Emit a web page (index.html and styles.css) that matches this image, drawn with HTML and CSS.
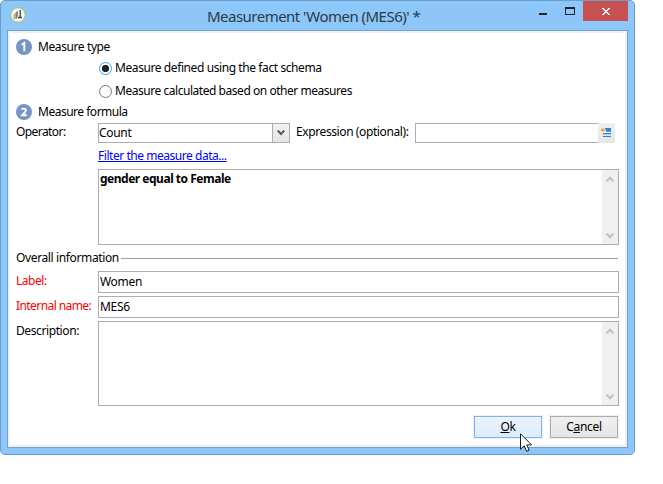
FILE: index.html
```html
<!DOCTYPE html>
<html lang="en">
<head>
<meta charset="utf-8">
<title>Measurement</title>
<link rel="stylesheet" href="styles.css">
</head>
<body>
<div class="window">
  <header class="titlebar">
    <svg class="app-icon" width="16" height="16" viewBox="0 0 16 16"><circle cx="8" cy="8" r="7.3" fill="#f4f5ee" stroke="#9bc464"/><path d="M3.5 7.5L7 4.5V12H3.5z" fill="#aeb0a9"/><path d="M6 4.5h2V9l-2 3z" fill="#858781"/><path d="M10.2 3v7M7.8 10.5h4" stroke="#3d403c" stroke-width="1.3"/></svg>
    <h1 class="title">Measurement 'Women (MES6)' *</h1>
    <div class="controls">
      <span class="minimize"></span>
      <span class="maximize"></span>
      <span class="close"><svg width="8" height="7" viewBox="0 0 8 7" shape-rendering="crispEdges"><path d="M0 0h2v1h1v1h2V1h1V0h2v1H7v1H6v1H5v1h1v1h1v1h1v1H6V6H5V5H3v1H2v1H0V6h1V5h1V4h1V3H2V2H1V1H0z" fill="#fff"/></svg></span>
    </div>
  </header>
  <main class="client">
    <div class="step"><span class="badge"><svg width="16" height="16" viewBox="0 0 16 16"><path d="M5.7 5.7L8.3 4v8.3" fill="none" stroke="#fff" stroke-width="1.9"/></svg></span><span class="t w-type">Measure type</span></div>
    <div class="radio first"><span class="dot on"></span><span class="t w-fact">Measure defined using the fact schema</span></div>
    <div class="radio"><span class="dot"></span><span class="t w-calc">Measure calculated based on other measures</span></div>
    <div class="step second"><span class="badge"><svg width="16" height="16" viewBox="0 0 16 16"><path d="M5.4 5.4C6.5 4.4 9.9 4 9.8 6.4C9.8 8 7.5 9.5 6.2 11.3H10.8" fill="none" stroke="#fff" stroke-width="1.9"/></svg></span><span class="t w-formula">Measure formula</span></div>
    <div class="row operator">
      <span class="label t w-op">Operator:</span>
      <div class="select"><span class="t w-count">Count</span><span class="drop"><svg width="8" height="6" viewBox="0 0 8 6"><path d="M.7 .5L4 4L7.3 .5" fill="none" stroke="#5a5a5a" stroke-width="2"/></svg></span></div>
      <span class="expr t w-expr">Expression (optional):</span>
      <div class="expr-box"></div>
      <span class="pick"><svg width="11" height="10" viewBox="0 0 11 10" shape-rendering="crispEdges"><path d="M4 0h6v3H4z" fill="#2d84d5"/><path d="M5 3h5v1H5z" fill="#659dde"/><path d="M2 5h8v1H2z" fill="#3b88d3"/><path d="M2 6h8v1H2z" fill="#a6c9eb"/><path d="M2 8h8v1H2z" fill="#2d84d5"/><path d="M1 0h2v1H1zM1 3h2v1H1z" fill="#f5cf88"/><path d="M0 1h3v2H0z" fill="#eea52b"/><path d="M3 1h2v2H3z" fill="#b8cbd6"/></svg></span>
    </div>
    <div class="filter"><a class="link t w-link" href="#">Filter the measure data...</a></div>
    <div class="area condition"><span class="t w-bold">gender equal to Female</span>
      <span class="scroll"><svg width="8" height="6" viewBox="0 0 8 6"><path d="M.7 5.3L4 1.8L7.3 5.3" /></svg><svg width="8" height="6" viewBox="0 0 8 6"><path d="M.7 .7L4 4.2L7.3 .7" /></svg></span>
    </div>
    <div class="section"><span class="t w-info">Overall information</span><span class="rule"></span></div>
    <div class="row field"><span class="label red t w-label">Label:</span><div class="input"><span class="t w-women">Women</span></div></div>
    <div class="row field"><span class="label red t w-name">Internal name:</span><div class="input"><span class="t w-mes">MES6</span></div></div>
    <div class="row desc"><span class="label t w-desc">Description:</span>
      <div class="area"><span class="scroll"><svg width="8" height="6" viewBox="0 0 8 6"><path d="M.7 5.3L4 1.8L7.3 5.3" /></svg><svg width="8" height="6" viewBox="0 0 8 6"><path d="M.7 .7L4 4.2L7.3 .7" /></svg></span></div>
    </div>
    <footer class="buttons"><button class="btn primary"><span class="t w-ok"><u>O</u>k</span></button><button class="btn"><span class="t w-cancel">C<u>a</u>ncel</span></button></footer>
  </main>
  <svg class="cursor" width="13" height="20" viewBox="0 0 13 20"><path d="M.5 .8V16.3L4.2 12.8L6.7 18.3L9.2 17.2L6.8 11.9H11.6z" fill="#fff" stroke="#171b2c"/></svg>
</div>
</body>
</html>
```
FILE: styles.css
```css
* { box-sizing: border-box; }
body { margin: 0; background: #fff; font: 12px/16px "Noto Sans", "Open Sans", sans-serif; color: #000; }
svg { display: block; flex: none; }
.window { position: relative; width: 635px; height: 455px; display: flex; flex-direction: column; padding: 0 6px 6px; border: 1px solid #6b9dca; border-radius: 5px; background: #8dc7fa; }
.titlebar { height: 29px; flex: none; display: flex; align-items: flex-start; }
.app-icon { margin: 6px 0 0 3px; }
.title { flex: 1; margin: 5px 0 0 181px; font-size: 15px; line-height: 20px; font-weight: 400; color: #2c3a47; white-space: nowrap; letter-spacing: -0.52px; }
.controls { display: flex; align-items: flex-start; }
.minimize { width: 8px; height: 2px; margin: 12px 18px 0 0; background: #222; }
.maximize { width: 10px; height: 8px; margin: 6px 8px 0 0; border: 1px solid #222; border-top-width: 2px; }
.close { width: 45px; height: 20px; background: #c75050; display: flex; justify-content: center; padding-top: 7px; }
.client { flex: 1; border: 1px solid #6fa3d3; box-shadow: inset 0 0 0 2px #f0f0f0; background: #fff; padding: 8px 8px 0 8px; display: flex; flex-direction: column; }

.t { white-space: nowrap; letter-spacing: -0.3px; }
.w-type, .w-expr, .w-desc { letter-spacing: -0.4px; }
.w-fact { letter-spacing: -0.41px; }
.w-calc { letter-spacing: -0.46px; }
.w-link { letter-spacing: -0.46px; }
.w-formula, .w-bold { letter-spacing: -0.49px; }
.w-op, .w-name { letter-spacing: -0.58px; }
.w-info { letter-spacing: -0.37px; }
.w-label { letter-spacing: -0.45px; }

.step { display: flex; height: 16px; gap: 6px; align-items: center; }
.badge { width: 16px; height: 16px; border-radius: 50%; background: #7596c5; }
.radio { display: flex; align-items: center; height: 16px; margin: 7px 0 0 83px; gap: 3px; }
.radio.first { margin-top: 5px; }
.dot { width: 13px; height: 13px; border: 1px solid #777; border-radius: 50%; background: #fff; }
.dot.on { border-color: #3b9bf0; background: radial-gradient(circle, #222 3.3px, #fff 4px); }
.second { margin-top: 5px; }
.row { display: flex; align-items: flex-start; }
.label { width: 82px; flex: none; margin-top: 1px; }
.red { color: #f00; }
.operator { height: 20px; margin-top: 3px; }
.select { width: 192px; height: 20px; border: 1px solid #abadb3; line-height: 18px; display: flex; justify-content: space-between; }
.drop { width: 17px; border-left: 1px solid #abadb3; background: linear-gradient(#f2f2f2, #e5e5e5); display: grid; place-items: center; }
.expr { width: 119px; margin: 1px 0 0 6px; }
.expr-box { width: 183px; height: 20px; border: 1px solid #abadb3; border-right: 0; margin-left: auto; }
.pick { width: 17px; height: 20px; background: linear-gradient(#f0f0f0, #e5e5e5); padding: 5px 0 0 3px; margin-right: 4px; }
.filter { height: 16px; margin: 5px 0 0 82px; }
.link { color: #00f; }
.area { width: 521px; display: flex; justify-content: space-between; border: 1px solid #abadb3; }
.condition { height: 76px; margin: 5px 0 0 82px; padding-left: 1px; font-weight: 700; line-height: 18px; }
.scroll { width: 16px; background: #f0f0f0; display: flex; flex-direction: column; justify-content: space-between; align-items: center; padding: 6px 0 5px; margin-left: auto; }
.scroll path { fill: none; stroke: #bfbfbf; stroke-width: 2; }
.section { display: flex; align-items: center; height: 16px; margin: 5px 0; }
.rule { height: 1px; flex: 1; background: #a0a0a0; margin: 1px 1px 0 2px; }
.field { height: 22px; margin-bottom: 3px; }
.field .label, .desc .label { margin-top: 2px; }
.input { width: 521px; height: 22px; border: 1px solid #abadb3; padding-left: 1px; line-height: 20px; }
.desc { height: 85px; }
.desc .area { height: 85px; }
.buttons { display: flex; justify-content: flex-end; gap: 8px; margin: 10px 1px 0 0; }
.btn { width: 68px; height: 22px; padding: 0; border: 1px solid #acacac; outline: 1px solid #f0f0f0; background: linear-gradient(#f0f0f0, #e5e5e5); font: inherit; line-height: 20px; color: #000; }
.primary { border-color: #7eb4ea; background: linear-gradient(#ecf4fc, #dcecfc); }
.cursor { position: absolute; left: 519px; top: 432px; }
```
